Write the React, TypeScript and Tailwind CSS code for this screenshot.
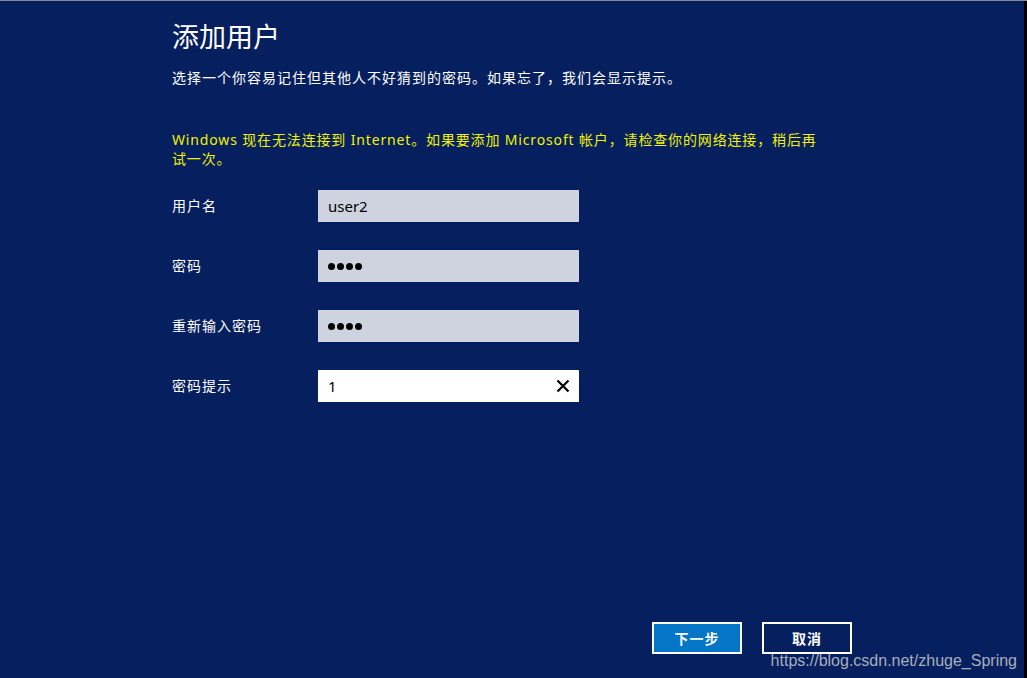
import React from "react";

const font = { fontFamily: '"Noto Sans", "Noto Sans CJK SC", sans-serif' };

function Field({ label, children }: { label: string; children: React.ReactNode }) {
  return (
    <div className="flex items-center h-[32px]">
      <div className="w-[146px] text-[14px] tracking-[1px] text-white leading-none">{label}</div>
      {children}
    </div>
  );
}

function Dots() {
  return (
    <div className="flex items-center gap-[2px]">
      {[0, 1, 2, 3].map((i) => (
        <span key={i} className="block w-[7px] h-[7px] rounded-full bg-black" />
      ))}
    </div>
  );
}

export default function App() {
  return (
    <div
      className="relative w-[1027px] h-[678px] flex flex-col bg-[#061f5e] overflow-hidden"
      style={font}
    >
      <div className="h-px bg-[#8c8c8c] w-full shrink-0" />
      <div className="flex flex-1 min-h-0">
        <div className="flex-1 flex flex-col pl-[172px]">
          <h1 className="mt-[18px] text-[27px] leading-[36px] text-white font-normal">添加用户</h1>
          <p className="mt-[13px] text-[14px] tracking-[1px] leading-[20px] text-white">
            选择一个你容易记住但其他人不好猜到的密码。如果忘了，我们会显示提示。
          </p>
          <p className="mt-[42px] w-[700px] text-[14px] tracking-[0.85px] leading-[19px] text-[#f2f200]">
            Windows 现在无法连接到 Internet。如果要添加 Microsoft 帐户，请检查你的网络连接，稍后再
            <br />
            试一次。
          </p>
          <div className="mt-[22px] flex flex-col gap-[28px]">
            <Field label="用户名">
              <div className="w-[261px] h-[32px] bg-[#cfd3df] flex items-center pl-[10px] text-[15px] text-black">
                user2
              </div>
            </Field>
            <Field label="密码">
              <div className="w-[261px] h-[32px] bg-[#cfd3df] flex items-center pl-[10px]">
                <Dots />
              </div>
            </Field>
            <Field label="重新输入密码">
              <div className="w-[261px] h-[32px] bg-[#cfd3df] flex items-center pl-[10px]">
                <Dots />
              </div>
            </Field>
            <Field label="密码提示">
              <div className="w-[261px] h-[32px] bg-white flex items-center justify-between pl-[10px] pr-[9px] text-[15px] text-black">
                <span>1</span>
                <svg width="14" height="14" viewBox="0 0 14 14">
                  <path d="M1.5 1.5 L12.5 12.5 M12.5 1.5 L1.5 12.5" stroke="#000" strokeWidth="2.2" />
                </svg>
              </div>
            </Field>
          </div>
          <div className="flex-1" />
          <div className="flex gap-[20px] ml-[480px] mb-[24px]">
            <button className="w-[90px] h-[32px] border-2 border-white bg-[#0376c8] text-white text-[14px] tracking-[1px] font-bold">
              下一步
            </button>
            <button className="w-[90px] h-[32px] border-2 border-white bg-transparent text-white text-[14px] tracking-[1px] font-bold">
              取消
            </button>
          </div>
        </div>
        <div className="w-[3px] bg-black shrink-0" />
      </div>
      <div
        className="absolute right-[10px] bottom-[9px] text-[16px] leading-none text-[#a9aebb]"
        style={{ fontFamily: '"Liberation Sans", Arial, sans-serif' }}
      >
        https://blog.csdn.net/zhuge_Spring
      </div>
    </div>
  );
}
